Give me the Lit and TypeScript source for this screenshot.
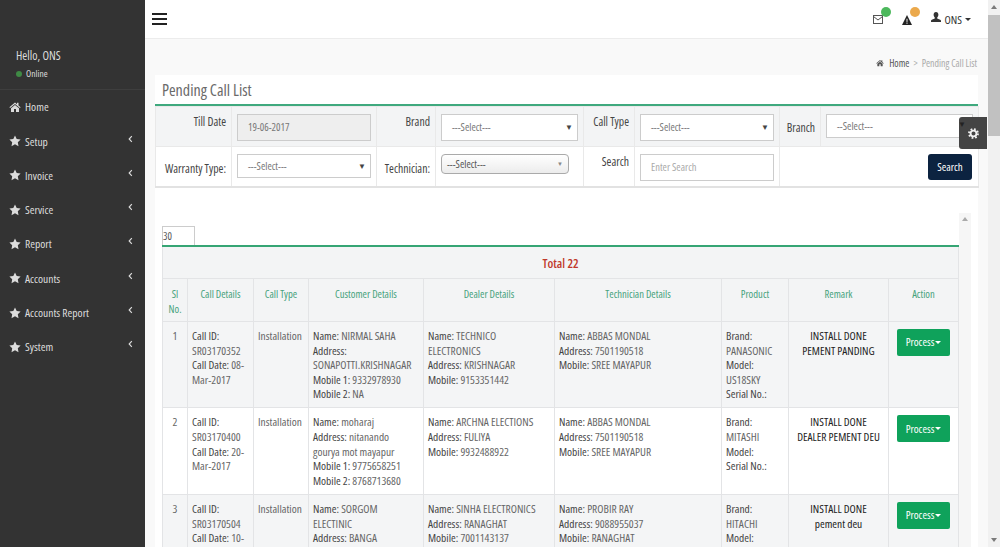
import { LitElement, html, css, svg } from "lit";
import { customElement } from "lit/decorators.js";

const star = svg`<polygon points="6,0.4 7.7,4 11.6,4.5 8.8,7.2 9.5,11.2 6,9.3 2.5,11.2 3.2,7.2 0.4,4.5 4.3,4" fill="currentColor"/>`;
const home = svg`<path d="M6 1.4 0.4 6.2l.7.8L6 2.9 10.9 7l.7-.8-2.1-1.8V1.8H8v1.4zM2 7.3V11h3V8h2v3h3V7.3L6 4z" fill="currentColor"/>`;

const menu = [
  { label: "Home", icon: home, sub: false },
  { label: "Setup", icon: star, sub: true },
  { label: "Invoice", icon: star, sub: true },
  { label: "Service", icon: star, sub: true },
  { label: "Report", icon: star, sub: true },
  { label: "Accounts", icon: star, sub: true },
  { label: "Accounts Report", icon: star, sub: true },
  { label: "System", icon: star, sub: true },
];

const cols = [25, 66, 55, 115, 131, 167, 67, 100, 70];
const heads = ["Sl No.", "Call Details", "Call Type", "Customer Details", "Dealer Details", "Technician Details", "Product", "Remark", "Action"];

type Pair = [string, string];
const rows: { sl: number; call: Pair[]; customer: Pair[]; dealer: Pair[]; tech: Pair[]; product: Pair[]; remark: string[] }[] = [
  {
    sl: 1,
    call: [["Call ID:", "SR03170352"], ["Call Date:", "08-Mar-2017"]],
    customer: [["Name:", "NIRMAL SAHA"], ["Address:", "SONAPOTTI.KRISHNAGAR"], ["Mobile 1:", "9332978930"], ["Mobile 2:", "NA"]],
    dealer: [["Name:", "TECHNICO ELECTRONICS"], ["Address:", "KRISHNAGAR"], ["Mobile:", "9153351442"]],
    tech: [["Name:", "ABBAS MONDAL"], ["Address:", "7501190518"], ["Mobile:", "SREE MAYAPUR"]],
    product: [["Brand:", "PANASONIC"], ["Model:", "US18SKY"], ["Serial No.:", ""]],
    remark: ["INSTALL DONE", "PEMENT PANDING"],
  },
  {
    sl: 2,
    call: [["Call ID:", "SR03170400"], ["Call Date:", "20-Mar-2017"]],
    customer: [["Name:", "moharaj"], ["Address:", "nitanando gourya mot mayapur"], ["Mobile 1:", "9775658251"], ["Mobile 2:", "8768713680"]],
    dealer: [["Name:", "ARCHNA ELECTIONS"], ["Address:", "FULIYA"], ["Mobile:", "9932488922"]],
    tech: [["Name:", "ABBAS MONDAL"], ["Address:", "7501190518"], ["Mobile:", "SREE MAYAPUR"]],
    product: [["Brand:", "MITASHI"], ["Model:", ""], ["Serial No.:", ""]],
    remark: ["INSTALL DONE", "DEALER PEMENT DEU"],
  },
  {
    sl: 3,
    call: [["Call ID:", "SR03170504"], ["Call Date:", "10-Mar-2017"]],
    customer: [["Name:", "SORGOM ELECTINIC"], ["Address:", "BANGA"], ["Mobile 1:", "9732145580"]],
    dealer: [["Name:", "SINHA ELECTRONICS"], ["Address:", "RANAGHAT"], ["Mobile:", "7001143137"]],
    tech: [["Name:", "PROBIR RAY"], ["Address:", "9088955037"], ["Mobile:", "RANAGHAT"]],
    product: [["Brand:", "HITACHI"], ["Model:", ""], ["Serial No.:", ""]],
    remark: ["INSTALL DONE", "pement deu"],
  },
];

@customElement("app-root")
export class AppRoot extends LitElement {
  static styles = css`
    :host {
      display: flex;
      position: relative;
      height: 100vh;
      overflow: hidden;
      font-family: "Open Sans", sans-serif;
      font-stretch: condensed;
      font-size: 11.5px;
      color: #666;
      background: #f9f9f9;
    }
    .side {
      width: 145px;
      flex: none;
      background: #333;
      color: #dcdcdc;
    }
    .hello {
      height: 89.6px;
      box-sizing: border-box;
      padding: 48px 0 0 16px;
      border-bottom: 1px solid #3e3e3e;
      font-size: 12px;
      font-weight: 500;
      line-height: 16px;
    }
    .online {
      display: flex;
      align-items: center;
      gap: 4px;
      margin-top: 2px;
      font-size: 9.5px;
      font-weight: 400;
      line-height: 16px;
    }
    .online i {
      width: 6px;
      height: 6px;
      border-radius: 50%;
      background: #3f8a45;
    }
    .nav-item {
      display: flex;
      align-items: center;
      height: 34.3px;
      padding-left: 9px;
      gap: 4px;
    }
    .nav-item svg {
      width: 12px;
      height: 12px;
      flex: none;
    }
    .nav-item .chev {
      width: 5px;
      height: 8px;
      margin-left: auto;
      margin-right: 12px;
      margin-top: -5px;
    }
    .main {
      flex: 1;
      min-width: 0;
    }
    .top {
      display: flex;
      align-items: center;
      height: 38px;
      padding: 0 17px 0 7px;
      background: #fff;
      border-bottom: 1px solid #ececec;
    }
    .burger {
      display: flex;
      flex-direction: column;
      gap: 3.5px;
      width: 15px;
    }
    .burger i {
      height: 1.5px;
      background: #222;
    }
    .top-right {
      display: flex;
      align-items: center;
      margin-left: auto;
      padding-top: 1px;
    }
    .ic {
      position: relative;
      display: flex;
    }
    .dot {
      position: absolute;
      width: 10px;
      height: 10px;
      border-radius: 50%;
      left: 8px;
      top: -8px;
    }
    .dot.g {
      background: #4cb85c;
    }
    .dot.o {
      background: #eba94c;
    }
    .mail,
    .warn {
      margin-right: 19px;
    }
    .user {
      display: flex;
      align-items: center;
      gap: 4px;
      color: #333;
    }
    .user .caret {
      margin-left: -1px;
    }
    .caret {
      width: 0;
      height: 0;
      border-left: 3px solid transparent;
      border-right: 3px solid transparent;
      border-top: 3px solid currentColor;
    }
    .crumb {
      display: flex;
      justify-content: flex-end;
      align-items: center;
      gap: 4px;
      height: 36px;
      padding: 11px 11px 0 0;
      box-sizing: border-box;
      font-size: 9.9px;
      color: #555;
    }
    .crumb svg {
      width: 8px;
      height: 8px;
      margin-right: 1px;
    }
    .crumb .sep,
    .crumb .cur {
      color: #aaa;
    }
    .panel {
      margin: 0 10px;
      background: #fff;
    }
    .title {
      height: 31px;
      padding: 0 7px;
      font-size: 16px;
      font-weight: 400;
      line-height: 31px;
      color: #6a6a6a;
      border-bottom: 2px solid #3fa97e;
      box-sizing: border-box;
    }
    table {
      width: 100%;
      border-collapse: collapse;
      table-layout: fixed;
    }
    .filter {
      border-bottom: 2px solid #e2e2e2;
    }
    .filter td {
      height: 40px;
      padding: 0 5px;
      border: 1px solid #e9e9e9;
      box-sizing: border-box;
      vertical-align: top;
    }
    .filter tr.shade td {
      background: #f3f4f5;
    }
    .filter td.lab {
      padding: 7px 5px 0 0;
      text-align: right;
      font-weight: 500;
      font-size: 11.7px;
      color: #444;
      line-height: 14px;
      white-space: nowrap;
    }
    .filter td.lab.mid {
      padding-top: 13px;
    }
    .filter td.lab.low {
      padding-top: 14px;
    }
    .field {
      display: flex;
      align-items: center;
      justify-content: space-between;
      height: 27px;
      margin-top: 6.5px;
      padding: 0 4px 0 10px;
      box-sizing: border-box;
      background: #fff;
      border: 1px solid #ccc;
      color: #777;
      font-size: 10.5px;
    }
    .field.off {
      background: #eee;
    }
    .field.hint {
      color: #aaa;
    }
    .field.short {
      height: 24px;
    }
    .field.branch {
      padding-right: 6px;
    }
    .field.branch .arrow {
      position: relative;
      z-index: 2;
      color: #222;
      margin-top: -3px;
    }
    .field.native {
      height: 20px;
      width: 128px;
      padding: 0 5px;
      border-radius: 4px;
      border-color: #aaa;
      background: linear-gradient(#fff, #ececec);
      color: #555;
    }
    .field.native .arrow {
      font-size: 6px;
      color: #888;
    }
    .arrow {
      font-size: 8px;
      color: #444;
      line-height: 1;
    }
    .btn-cell {
      text-align: right;
    }
    .search {
      display: inline-block;
      margin: 6.5px 1px 0 0;
      width: 44px;
      height: 26px;
      line-height: 26px;
      text-align: center;
      background: #0c2340;
      color: #fff;
      border-radius: 3px;
      font-size: 11px;
    }
    .lower {
      display: flex;
      padding: 25px 7px 0;
    }
    .list {
      flex: 1;
      min-width: 0;
      padding-top: 13px;
    }
    .size {
      display: block;
      width: 33px;
      height: 19px;
      box-sizing: border-box;
      border: 1px solid #ccc;
      border-bottom: 0;
      font-size: 10.5px;
      line-height: 19px;
      color: #555;
    }
    .data {
      border-top: 2px solid #36a574;
    }
    .data td,
    .data th {
      border: 1px solid #e3e4e6;
      padding: 7px 4px 5.5px 4px;
      vertical-align: top;
      line-height: 14.6px;
      font-size: 11.4px;
    }
    .data td.tight {
      padding-right: 8px;
    }
    .data .total td {
      height: 33px;
      box-sizing: border-box;
      padding: 5px 0 0;
      background: #f3f4f5;
      text-align: center;
      vertical-align: middle;
      color: #c0392b;
      font-weight: 600;
      font-size: 12.5px;
    }
    .data th {
      height: 43px;
      box-sizing: border-box;
      padding: 8px 4px 4px;
      background: #f3f4f5;
      color: #46a27c;
      font-weight: 500;
      font-size: 10.6px;
    }
    .data tbody tr:nth-child(odd) td {
      background: #f4f5f6;
    }
    .data tbody tr:nth-child(even) td {
      background: #fff;
    }
    .data td b {
      color: #444;
      font-weight: 500;
    }
    .data td.c {
      text-align: center;
    }
    .data td.remark {
      text-align: center;
      color: #222;
      font-weight: 500;
    }
    .process {
      display: inline-flex;
      align-items: center;
      justify-content: center;
      gap: 1px;
      width: 53px;
      height: 27px;
      background: #0fa25b;
      color: #fff;
      border-radius: 2px;
      font-size: 11px;
    }
    .inner-track {
      width: 12px;
      margin-left: 1px;
      background: #f6f6f6;
      display: flex;
      justify-content: center;
      align-items: flex-start;
      padding-top: 4px;
      box-sizing: border-box;
      color: #aaa;
    }
    .tri-up,
    .tri-down {
      width: 0;
      height: 0;
      border-left: 3px solid transparent;
      border-right: 3px solid transparent;
    }
    .tri-up {
      border-bottom: 4px solid currentColor;
    }
    .tri-down {
      border-top: 4px solid currentColor;
    }
    .page-track {
      width: 12px;
      flex: none;
      background: #f1f1f1;
      display: flex;
      flex-direction: column;
      align-items: center;
      color: #7a7a7a;
      padding: 5px 0;
      box-sizing: border-box;
    }
    .thumb {
      align-self: stretch;
      height: 121px;
      margin: 6px 0 auto;
      background: #c1c1c1;
    }
    .gear {
      position: absolute;
      z-index: 1;
      left: 959px;
      top: 117px;
      width: 28px;
      height: 32px;
      display: flex;
      align-items: center;
      justify-content: center;
      background: #444;
      border-radius: 3px 0 0 3px;
      color: #f0f0f0;
    }
  `;

  private pairs(list: Pair[]) {
    return list.map(([k, v]) => html`<div><b>${k}</b> ${v}</div>`);
  }

  render() {
    return html`
      <aside class="side">
        <div class="hello">
          Hello, ONS
          <div class="online"><i></i>Online</div>
        </div>
        ${menu.map(
          (m) => html`
            <div class="nav-item">
              <svg viewBox="0 0 12 12">${m.icon}</svg>
              <span>${m.label}</span>
              ${m.sub
                ? html`<svg class="chev" viewBox="0 0 6 9"><path d="M4.6 1 1.4 4.5 4.6 8" fill="none" stroke="currentColor" stroke-width="1.4"/></svg>`
                : ""}
            </div>
          `
        )}
      </aside>

      <div class="main">
        <header class="top">
          <div class="burger"><i></i><i></i><i></i></div>
          <div class="top-right">
            <span class="ic mail">
              <svg width="10" height="9" viewBox="0 0 10 9"><rect x=".5" y=".5" width="9" height="8" fill="none" stroke="#555"/><path d="M.5 1.5 5 5l4.5-3.5" fill="none" stroke="#555"/></svg>
              <span class="dot g"></span>
            </span>
            <span class="ic warn">
              <svg width="10" height="10" viewBox="0 0 10 10"><path d="M5 0 10 10H0z" fill="#222"/><path d="M4.500 3.800h1l-.1 3.400h-.8zM4.500 7.800h1v1h-1z" fill="#fff"/></svg>
              <span class="dot o"></span>
            </span>
            <span class="user">
              <svg width="10" height="11" viewBox="0 0 10 11" style="margin-top:-5px"><path d="M5 0c1.500 0 2.400 1.200 2.400 2.800 0 1.200-.6 2.200-1.200 2.700v.9l3 1.300c.5.200.8.600.8 1.100V10H0V8.800c0-.5.300-.9.800-1.100l3-1.300v-.9C3.200 5 2.600 4 2.600 2.800 2.600 1.200 3.500 0 5 0z" fill="#333"/></svg>
              ONS
              <span class="caret"></span>
            </span>
          </div>
        </header>

        <nav class="crumb">
          <svg viewBox="0 0 12 12">${home}</svg>
          <span>Home</span>
          <span class="sep">&gt;</span>
          <span class="cur">Pending Call List</span>
        </nav>

        <section class="panel">
          <div class="title">Pending Call List</div>
          <table class="filter">
            <colgroup>
              <col style="width:76px" /><col style="width:145px" /><col style="width:59px" /><col style="width:148px" />
              <col style="width:51px" /><col style="width:145px" /><col style="width:41px" /><col style="width:158px" />
            </colgroup>
            <tr class="shade">
              <td class="lab">Till Date</td>
              <td><div class="field off">19-06-2017</div></td>
              <td class="lab">Brand</td>
              <td><div class="field">---Select---<span class="arrow">▼</span></div></td>
              <td class="lab">Call Type</td>
              <td><div class="field">---Select---<span class="arrow">▼</span></div></td>
              <td class="lab mid">Branch</td>
              <td><div class="field short branch">--Select---<span class="arrow">▼</span></div></td>
            </tr>
            <tr>
              <td class="lab low">Warranty Type:</td>
              <td><div class="field short">---Select---<span class="arrow">▼</span></div></td>
              <td class="lab low">Technician:</td>
              <td><div class="field native">---Select---<span class="arrow">▼</span></div></td>
              <td class="lab">Search</td>
              <td><div class="field hint">Enter Search</div></td>
              <td colspan="2" class="btn-cell"><span class="search">Search</span></td>
            </tr>
          </table>
        </section>

        <section class="panel lower">
          <div class="list">
            <span class="size">30</span>
            <table class="data">
              <colgroup>${cols.map((w) => html`<col style="width:${w}px" />`)}</colgroup>
              <thead>
                <tr class="total"><td colspan="9">Total 22</td></tr>
                <tr>${heads.map((h) => html`<th>${h}</th>`)}</tr>
              </thead>
              <tbody>
                ${rows.map(
                  (r) => html`
                    <tr>
                      <td class="c">${r.sl}</td>
                      <td>${this.pairs(r.call)}</td>
                      <td>Installation</td>
                      <td class="tight">${this.pairs(r.customer)}</td>
                      <td class="tight">${this.pairs(r.dealer)}</td>
                      <td>${this.pairs(r.tech)}</td>
                      <td>${this.pairs(r.product)}</td>
                      <td class="remark">${r.remark.map((l) => html`<div>${l}</div>`)}</td>
                      <td class="c"><span class="process">Process<span class="caret"></span></span></td>
                    </tr>
                  `
                )}
              </tbody>
            </table>
          </div>
          <div class="inner-track"><span class="tri-up"></span></div>
        </section>
      </div>

      <div class="page-track">
        <span class="tri-up"></span>
        <div class="thumb"></div>
        <span class="tri-down"></span>
      </div>

      <div class="gear">
        <svg width="11" height="11" viewBox="0 0 12 12">
          <circle cx="6" cy="6" r="3.2" fill="none" stroke="currentColor" stroke-width="2"/>
          <circle cx="6" cy="6" r="4.9" fill="none" stroke="currentColor" stroke-width="2" stroke-dasharray="1.9 1.95"/>
        </svg>
      </div>
    `;
  }
}
